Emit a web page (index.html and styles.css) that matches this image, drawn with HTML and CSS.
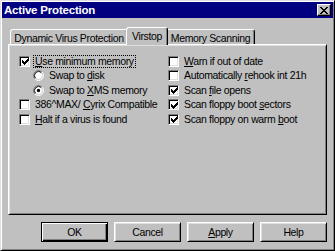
FILE: index.html
```html
<!DOCTYPE html>
<html>
<head>
<meta charset="utf-8">
<link rel="stylesheet" href="styles.css">
</head>
<body>
<div class="window">
  <div class="titlebar">
    <span class="title">Active Protection</span>
    <span class="close"><svg width="8" height="7" viewBox="0 0 8 7"><path d="M0 0h2v1h-2z M6 0h2v1h-2z M1 1h2v1h-2z M5 1h2v1h-2z M2 2h4v1h-4z M3 3h2v1h-2z M2 4h4v1h-4z M1 5h2v1h-2z M5 5h2v1h-2z M0 6h2v1h-2z M6 6h2v1h-2z" fill="#000"/></svg></span>
  </div>
  <div class="content">
    <div class="tabs">
      <div class="tab tab-dynamic">Dynamic Virus Protection</div>
      <div class="tab tab-virstop active">Virstop</div>
      <div class="tab tab-memory">Memory Scanning</div>
    </div>
    <div class="panel">
      <div class="col">
        <div class="row">
          <span class="box"><svg class="check" width="7" height="7" viewBox="0 0 7 7"><path d="M0 2h1v3h-1z M1 3h1v3h-1z M2 4h1v3h-1z M3 3h1v3h-1z M4 2h1v3h-1z M5 1h1v3h-1z M6 0h1v3h-1z" fill="#000"/></svg></span>
          <span class="label focus"><u>U</u>se minimum memory</span>
        </div>
        <div class="row indent">
          <svg class="radio" width="11" height="11" viewBox="0 0 12 12"><circle cx="6" cy="6" r="4.2" fill="#fff"/><path d="M2.11 9.89 A5.5 5.5 0 0 1 9.89 2.11" stroke="#808080" fill="none"/><path d="M9.89 2.11 A5.5 5.5 0 0 1 2.11 9.89" stroke="#fff" fill="none"/><path d="M2.82 9.18 A4.5 4.5 0 0 1 9.18 2.82" stroke="#000" fill="none"/><path d="M9.18 2.82 A4.5 4.5 0 0 1 2.82 9.18" stroke="#dfdfdf" fill="none"/></svg>
          <span class="label">Swap to <u>d</u>isk</span>
        </div>
        <div class="row indent">
          <svg class="radio" width="11" height="11" viewBox="0 0 12 12"><circle cx="6" cy="6" r="4.2" fill="#fff"/><path d="M2.11 9.89 A5.5 5.5 0 0 1 9.89 2.11" stroke="#808080" fill="none"/><path d="M9.89 2.11 A5.5 5.5 0 0 1 2.11 9.89" stroke="#fff" fill="none"/><path d="M2.82 9.18 A4.5 4.5 0 0 1 9.18 2.82" stroke="#000" fill="none"/><path d="M9.18 2.82 A4.5 4.5 0 0 1 2.82 9.18" stroke="#dfdfdf" fill="none"/><circle cx="6" cy="6" r="1.8" fill="#000"/></svg>
          <span class="label">Swap to <u>X</u>MS memory</span>
        </div>
        <div class="row">
          <span class="box"></span>
          <span class="label">386^MAX/ <u>C</u>yrix Compatible</span>
        </div>
        <div class="row">
          <span class="box"></span>
          <span class="label"><u>H</u>alt if a virus is found</span>
        </div>
      </div>
      <div class="col">
        <div class="row">
          <span class="box"></span>
          <span class="label"><u>W</u>arn if out of date</span>
        </div>
        <div class="row">
          <span class="box"></span>
          <span class="label">Automatically <u>r</u>ehook int 21h</span>
        </div>
        <div class="row">
          <span class="box"><svg class="check" width="7" height="7" viewBox="0 0 7 7"><path d="M0 2h1v3h-1z M1 3h1v3h-1z M2 4h1v3h-1z M3 3h1v3h-1z M4 2h1v3h-1z M5 1h1v3h-1z M6 0h1v3h-1z" fill="#000"/></svg></span>
          <span class="label">Scan <u>f</u>ile opens</span>
        </div>
        <div class="row">
          <span class="box"><svg class="check" width="7" height="7" viewBox="0 0 7 7"><path d="M0 2h1v3h-1z M1 3h1v3h-1z M2 4h1v3h-1z M3 3h1v3h-1z M4 2h1v3h-1z M5 1h1v3h-1z M6 0h1v3h-1z" fill="#000"/></svg></span>
          <span class="label">Scan floppy boot <u>s</u>ectors</span>
        </div>
        <div class="row">
          <span class="box"><svg class="check" width="7" height="7" viewBox="0 0 7 7"><path d="M0 2h1v3h-1z M1 3h1v3h-1z M2 4h1v3h-1z M3 3h1v3h-1z M4 2h1v3h-1z M5 1h1v3h-1z M6 0h1v3h-1z" fill="#000"/></svg></span>
          <span class="label">Scan floppy on warm <u>b</u>oot</span>
        </div>
      </div>
    </div>
    <div class="buttons">
      <div class="btn default">OK</div>
      <div class="btn">Cancel</div>
      <div class="btn"><u>A</u>pply</div>
      <div class="btn">Help</div>
    </div>
  </div>
</div>
</body>
</html>
```
FILE: styles.css
```css
* { box-sizing: border-box; }
html, body { margin: 0; padding: 0; }
body {
  width: 335px;
  height: 251px;
  overflow: hidden;
  background: #c0c0c0;
  font-family: "Liberation Sans", Arial, sans-serif;
  font-size: 10.5px;
  letter-spacing: -0.35px;
  color: #000;
}
u { text-decoration: underline; text-underline-offset: 1px; }
.window {
  width: 335px;
  height: 251px;
  border: 1px solid;
  border-color: #dfdfdf #000 #000 #dfdfdf;
  box-shadow: inset 1px 1px #fff, inset -1px -1px #808080;
  padding: 1px;
  display: flex;
  flex-direction: column;
}
.titlebar {
  height: 16px;
  flex: none;
  background: #000080;
  display: flex;
  align-items: center;
  justify-content: space-between;
  padding: 0 2px;
}
.title {
  color: #fff;
  font-weight: bold;
  font-size: 11.5px;
  letter-spacing: -0.2px;
  line-height: 16px;
}
.close {
  width: 14px;
  height: 12px;
  background: #c0c0c0;
  border: 1px solid;
  border-color: #fff #000 #000 #fff;
  box-shadow: inset -1px -1px #808080;
  display: flex;
  align-items: center;
  justify-content: center;
}
.content {
  flex: 1;
  display: flex;
  flex-direction: column;
  padding: 9px 6px 7px 6px;
}
.tabs {
  height: 17px;
  display: flex;
  align-items: flex-end;
  padding-left: 2px;
}
.tab {
  height: 15px;
  border: 1px solid;
  border-bottom: none;
  border-color: #fff #000 transparent #fff;
  border-radius: 3px 3px 0 0;
  box-shadow: inset -1px 0 #808080;
  text-align: center;
  line-height: 14px;
  padding-top: 1px;
  white-space: nowrap;
}
.tab-dynamic { width: 118px; }
.tab-virstop { width: 38px; }
.tab-memory { width: 89px; }
.tab.active {
  width: 42px;
  height: 18px;
  margin: 0 -2px -1px;
  background: #c0c0c0;
  position: relative;
  z-index: 1;
  padding-top: 1px;
}
.panel {
  height: 171px;
  border: 1px solid;
  border-color: #fff #000 #000 #fff;
  box-shadow: inset 1px 1px #dfdfdf, inset -1px -1px #808080;
  padding: 9px 0 0 10px;
  display: grid;
  grid-template-columns: 149px 1fr;
  align-content: start;
}
.row {
  height: 14.5px;
  display: flex;
  align-items: center;
  white-space: nowrap;
}
.row.indent { padding-left: 14px; }
.box {
  width: 11px;
  height: 11px;
  flex: none;
  background: #fff;
  border: 1px solid;
  border-color: #808080 #fff #fff #808080;
  box-shadow: inset 1px 1px #000, inset -1px -1px #dfdfdf;
  display: flex;
  align-items: center;
  justify-content: center;
}
.check { display: block; margin: 1px 0 0 1px; }
.radio { display: block; flex: none; }
.label {
  margin-left: 3px;
  padding: 0 1px;
  border: 1px solid transparent;
  line-height: 11px;
}
.label.focus { border: 1px dotted #000; }
.buttons {
  margin-top: 7px;
  display: flex;
  justify-content: flex-end;
  gap: 6px;
}
.btn {
  width: 67px;
  height: 20px;
  border: 1px solid;
  border-color: #fff #000 #000 #fff;
  box-shadow: inset 1px 1px #dfdfdf, inset -1px -1px #808080;
  text-align: center;
  line-height: 18px;
}
.btn.default {
  border-color: #000;
  box-shadow: inset 1px 1px #fff, inset -1px -1px #000, inset -2px -2px #808080;
}
```
